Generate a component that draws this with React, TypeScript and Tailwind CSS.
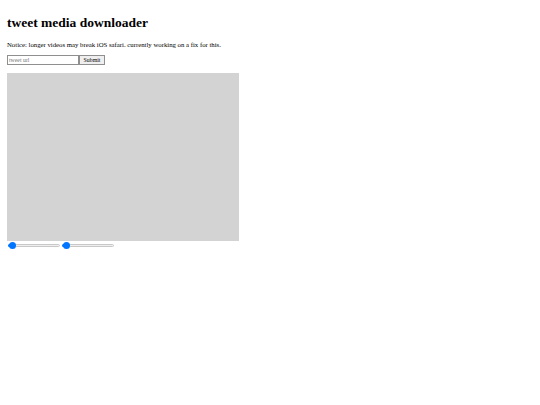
function Slider() {
  return (
    <div className="relative h-[7px] w-[54px]">
      <div className="absolute left-[1px] right-[1px] top-[2px] h-[3px] rounded-full border border-[#c8c8c8] bg-[#efefef]" />
      <div className="absolute left-[1px] top-[2px] h-[3px] w-[6px] rounded-full bg-[#0075ff]" />
      <div className="absolute left-[2px] top-0 h-[7px] w-[7px] rounded-full bg-[#0075ff]" />
    </div>
  );
}

export default function App() {
  return (
    <div className="min-h-screen bg-white px-[7px] pt-[15px] font-['Liberation_Serif',serif] text-black">
      <h1 className="text-[13.5px] font-bold leading-[16px]">tweet media downloader</h1>
      <p className="mt-[10px] text-[6.75px] leading-[8px]">
        Notice: longer videos may break iOS safari. currently working on a fix for this.
      </p>
      <form className="mt-[6px] flex items-center" onSubmit={(e) => e.preventDefault()}>
        <input
          type="text"
          placeholder="tweet url"
          className="h-[10px] w-[72px] border border-[#8f8f8f] bg-white px-[1px] text-[5.8px] leading-[7px] placeholder:text-[#757575]"
        />
        <button
          type="submit"
          className="h-[10px] w-[26px] border border-[#8f8f8f] bg-[#efefef] text-[5.8px] leading-[7px]"
        >
          Submit
        </button>
      </form>
      <div className="mt-[8px] h-[168px] w-[232px] bg-[#d3d3d3]" />
      <div className="mt-[1px] flex">
        <Slider />
        <Slider />
      </div>
    </div>
  );
}
